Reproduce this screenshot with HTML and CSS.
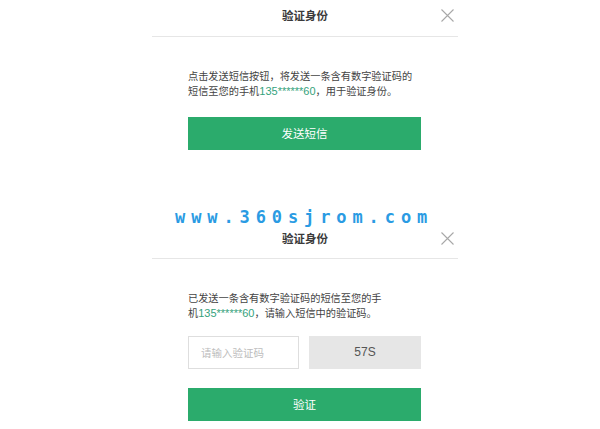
FILE: index.html
```html
<!DOCTYPE html>
<html lang="zh-CN">
<head>
<meta charset="utf-8">
<title>验证身份</title>
<link rel="stylesheet" href="styles.css">
</head>
<body>
<div class="page">
  <section class="dialog dialog-first">
    <header class="dialog-header">
      <h2 class="dialog-title">验证身份</h2>
      <span class="close" aria-label="关闭">
        <svg width="13" height="13" viewBox="0 0 13 13"><path d="M0.5 0.5 L12.5 12.5 M12.5 0.5 L0.5 12.5" stroke="#a8a8a8" stroke-width="1.1" fill="none"/></svg>
      </span>
    </header>
    <div class="dialog-body">
      <p class="desc">点击发送短信按钮，将发送一条含有数字验证码的<br>短信至您的手机<span class="phone">135******60</span>，用于验证身份。</p>
      <button class="btn btn-send">发送短信</button>
    </div>
  </section>

  <section class="dialog dialog-second">
    <header class="dialog-header">
      <h2 class="dialog-title">验证身份</h2>
      <span class="close" aria-label="关闭">
        <svg width="13" height="13" viewBox="0 0 13 13"><path d="M0.5 0.5 L12.5 12.5 M12.5 0.5 L0.5 12.5" stroke="#a8a8a8" stroke-width="1.1" fill="none"/></svg>
      </span>
    </header>
    <div class="dialog-body">
      <p class="desc">已发送一条含有数字验证码的短信至您的手<br>机<span class="phone">135******60</span>，请输入短信中的验证码。</p>
      <div class="code-row">
        <div class="code-input">请输入验证码</div>
        <div class="countdown">57S</div>
      </div>
      <button class="btn btn-verify">验证</button>
    </div>
  </section>

  <div class="watermark">www.360sjrom.com</div>
</div>
</body>
</html>
```

FILE: styles.css
```css
* { box-sizing: border-box; }
html, body {
  margin: 0;
  padding: 0;
  background: #ffffff;
}
body {
  font-family: "Noto Sans CJK SC", "Microsoft YaHei", sans-serif;
  color: #444;
}
.page {
  position: relative;
  width: 600px;
  height: 429px;
  overflow: hidden;
}
.dialog {
  position: relative;
  width: 306px;
  margin-left: 152px;
}
.dialog-second {
  margin-top: 73px;
}
.dialog-header {
  position: relative;
  height: 37px;
  border-bottom: 1px solid #e6e6e6;
  text-align: center;
}
.dialog-second .dialog-header {
  height: 36px;
}
.dialog-title {
  margin: 0;
  padding-top: 6px;
  font-size: 11.5px;
  line-height: 18px;
  font-weight: bold;
  color: #3a3a3a;
}
.close {
  position: absolute;
  right: 4px;
  top: 9px;
  width: 13px;
  height: 13px;
  display: block;
}
.close svg { display: block; }
.dialog-body {
  padding: 0 37px 0 36px;
}
.desc {
  margin: 31px 0 0;
  font-size: 10.2px;
  line-height: 15px;
  color: #444;
  white-space: nowrap;
}
.phone {
  color: #35a27c;
  font-family: "Liberation Sans", Arial, sans-serif;
  font-size: 11px;
}
.btn {
  display: block;
  width: 233px;
  height: 33px;
  border: 0;
  margin: 18px 0 0;
  padding: 0;
  background: #2bab6c;
  color: #ffffff;
  font-family: "Noto Sans CJK SC", sans-serif;
  font-size: 11.5px;
  line-height: 33px;
  text-align: center;
}
.btn-verify {
  margin-top: 19px;
}
.code-row {
  display: flex;
  gap: 10px;
  margin-top: 15px;
  height: 33px;
}
.code-input {
  width: 111px;
  height: 33px;
  border: 1px solid #dedede;
  padding-left: 12px;
  font-size: 10.5px;
  line-height: 31px;
  color: #bdbdbd;
}
.countdown {
  width: 112px;
  height: 33px;
  background: #e6e6e6;
  color: #555;
  font-family: "Liberation Sans", Arial, sans-serif;
  font-size: 12px;
  line-height: 33px;
  text-align: center;
}
.watermark {
  position: absolute;
  left: 175px;
  top: 206px;
  font-family: "DejaVu Sans Mono", "Liberation Mono", monospace;
  font-weight: bold;
  font-size: 17px;
  line-height: 22px;
  letter-spacing: 5.9px;
  color: #2a9be3;
  white-space: nowrap;
}
```
